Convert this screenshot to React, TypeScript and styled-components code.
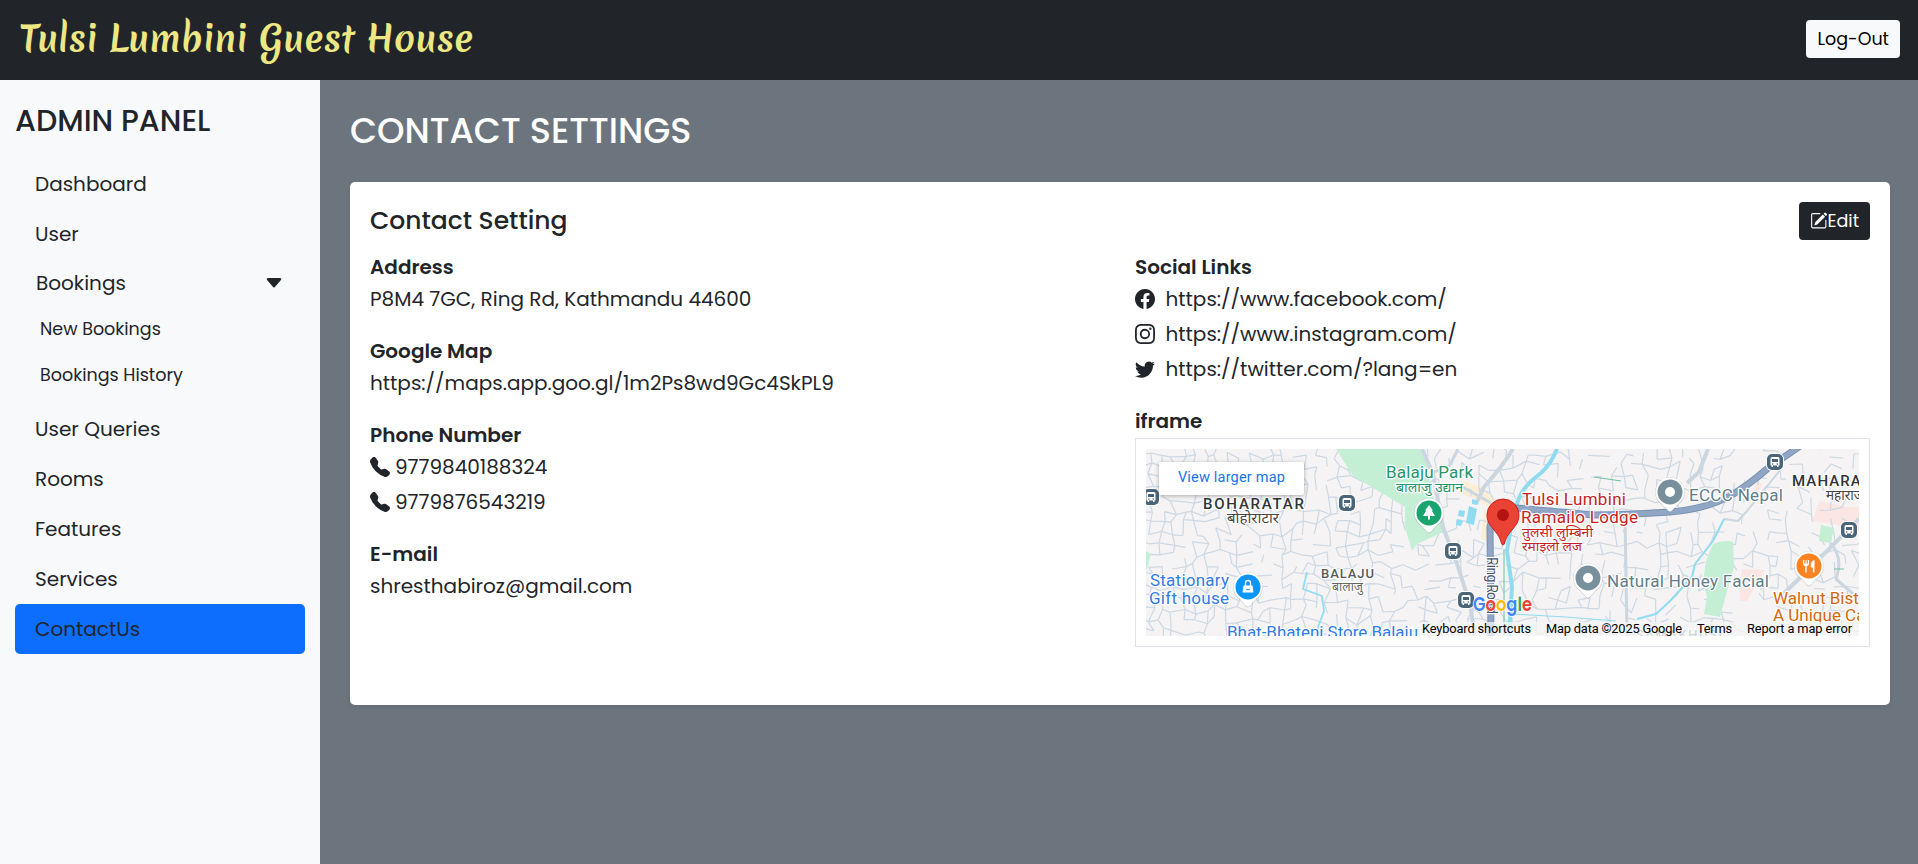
import React from 'react';
import styled, { createGlobalStyle, css } from 'styled-components';
import {
  BsCaretDownFill,
  BsFacebook,
  BsInstagram,
  BsPencilSquare,
  BsTelephoneFill,
  BsTwitter,
} from 'react-icons/bs';

const GlobalStyle = createGlobalStyle`
  html { font-size: 20px; }
  *, *::before, *::after { box-sizing: border-box; }
  body {
    margin: 0;
    font-family: Poppins, Inter, sans-serif;
    font-size: 1rem;
    line-height: 1.5;
    color: #212529;
    background: #6c757d;
  }
  h1, h2, h3, p, ul { margin: 0; padding: 0; }
  ul { list-style: none; }
`;

const Page = styled.div`
  display: flex;
  flex-direction: column;
  height: 864px;
  overflow: hidden;
`;

const Header = styled.header`
  display: flex;
  align-items: flex-start;
  justify-content: space-between;
  height: 80px;
  padding: 20px 18px 0 20px;
  background: #212529;
`;

const Brand = styled.h1`
  font-family: Merienda, Lato, sans-serif;
  font-size: 35px;
  font-weight: 700;
  line-height: 42px;
  margin-top: -2px;
  color: #ede784;
  white-space: nowrap;
`;

const Button = styled.button<{ $dark?: boolean }>`
  display: inline-flex;
  align-items: center;
  height: 38px;
  padding: 0 11px;
  border: 0;
  border-radius: 4px;
  font: 400 17.5px/26px Poppins, Inter, sans-serif;
  color: ${(p) => (p.$dark ? '#fff' : '#000')};
  background: ${(p) => (p.$dark ? '#212529' : '#f8f9fa')};
`;

const Body = styled.div`
  display: flex;
  flex: 1;
`;

const Sidebar = styled.aside`
  width: 320px;
  padding: 23px 15px 0;
  background: #f8f9fa;
`;

const SidebarTitle = styled.h2`
  margin-bottom: 20px;
  font-size: 30px;
  font-weight: 500;
  line-height: 36px;
`;

const NavItem = styled.li<{ $active?: boolean }>`
  height: 50px;
  padding: 10px 20px;
  border-radius: 5px;
  line-height: 30px;
  ${(p) => p.$active && css`background: #0d6efd;`}
`;

const NavToggle = styled.li`
  display: flex;
  align-items: center;
  justify-content: space-between;
  height: 47px;
  padding: 0 21px;
  line-height: 30px;
`;

const SubNav = styled.ul`
  padding-bottom: 5.5px;
`;

const SubNavItem = styled.li`
  padding: 10px 25px;
  font-size: 17.5px;
  line-height: 26.25px;
`;

const Main = styled.main`
  flex: 1;
  padding: 30px 28px 0 30px;
`;

const PageTitle = styled.h2`
  margin-bottom: 30px;
  font-size: 35px;
  font-weight: 500;
  line-height: 42px;
  color: #fff;
`;

const Card = styled.section`
  height: 523px;
  padding: 20px;
  border-radius: 5px;
  background: #fff;
  box-shadow: 0 2px 5px rgba(0, 0, 0, 0.075);
`;

const CardHeader = styled.div`
  display: flex;
  align-items: center;
  justify-content: space-between;
  margin-bottom: 15px;
`;

const CardTitle = styled.h3`
  font-size: 25px;
  font-weight: 500;
  line-height: 30px;
`;

const Columns = styled.div`
  display: grid;
  grid-template-columns: 1fr 1fr;
  column-gap: 30px;
`;

const Group = styled.div`
  margin-bottom: 25px;
`;

const GroupTitle = styled.h3`
  margin-bottom: 5px;
  font-size: 20px;
  font-weight: 600;
  line-height: 24px;
`;

const Line = styled.p<{ $gap?: number }>`
  display: flex;
  align-items: center;
  gap: ${(p) => p.$gap ?? 5}px;
  height: 30px;
  font-weight: 400;
  & + & { margin-top: 5px; }
`;

const Frame = styled.div`
  padding: 10px;
  border: 1px solid #dee2e6;
`;

const MapView = styled.div`
  position: relative;
  height: 187px;
  overflow: hidden;
  font-family: Roboto, sans-serif;
  svg { display: block; }
`;

const LargerMap = styled.a`
  position: absolute;
  top: 13px;
  left: 13px;
  width: 145px;
  height: 33px;
  border-radius: 2px;
  background: #fff;
  box-shadow: 0 1px 4px rgba(0, 0, 0, 0.3);
  font-size: 14.5px;
  line-height: 32px;
  letter-spacing: 0.2px;
  text-align: center;
  color: #1a73e8;
`;

/* ---------- map drawing ---------- */

const streets = (() => {
  let seed = 11;
  const rnd = () => {
    seed = (seed * 16807) % 2147483647;
    return seed / 2147483647;
  };
  const step = 11;
  const cols = 68;
  const rows = 19;
  const pts: [number, number][][] = [];
  for (let r = 0; r < rows; r++) {
    pts.push([]);
    for (let c = 0; c < cols; c++) {
      pts[r].push([c * step - 6 + (rnd() - 0.5) * 8, r * step - 6 + (rnd() - 0.5) * 8 + (c % 7) * 0.6]);
    }
  }
  let d = '';
  for (let r = 0; r < rows - 1; r++) {
    for (let c = 0; c < cols - 1; c++) {
      const density = c > 52 ? 0.36 : c < 24 ? 0.64 : 0.5;
      const [x, y] = pts[r][c];
      if (rnd() < density) d += `M${x.toFixed(1)} ${y.toFixed(1)}L${pts[r][c + 1][0].toFixed(1)} ${pts[r][c + 1][1].toFixed(1)}`;
      if (rnd() < density) d += `M${x.toFixed(1)} ${y.toFixed(1)}L${pts[r + 1][c][0].toFixed(1)} ${pts[r + 1][c][1].toFixed(1)}`;
    }
  }
  return d;
})();

const Label = styled.text<{ $size?: number; $weight?: number }>`
  font-family: Roboto, 'Noto Sans', sans-serif;
  font-size: ${(p) => p.$size ?? 17}px;
  font-weight: ${(p) => p.$weight ?? 400};
  paint-order: stroke;
  stroke: #fff;
  stroke-width: 2.5px;
  stroke-linejoin: round;
`;

const Attribution = styled.text`
  font-family: Roboto, sans-serif;
  font-size: 12.8px;
  fill: #000;
`;

const Logo = styled.text`
  font-family: Poppins, sans-serif;
  font-size: 19px;
  font-weight: 600;
  paint-order: stroke;
  stroke: #fff;
  stroke-width: 1.5px;
`;

const BusStop = ({ x, y }: { x: number; y: number }) => (
  <g transform={`translate(${x} ${y})`}>
    <rect x="-9" y="-9" width="18" height="18" rx="6" fill="#fff" />
    <rect x="-8" y="-8" width="16" height="16" rx="5" fill="#4a6479" />
    <path d="M-4.500 -3.500Q-4.500 -5 -3 -5H3Q4.500 -5 4.500 -3.500V3.500H3.500V5H2V3.500H-2V5H-3.500V3.500H-4.500Z" fill="#fff" />
    <rect x="-3" y="-3" width="6" height="3" fill="#4a6479" />
    <circle cx="-2.300" cy="2" r=".8" fill="#4a6479" />
    <circle cx="2.300" cy="2" r=".8" fill="#4a6479" />
  </g>
);

const Pin = ({ x, y, color, children }: { x: number; y: number; color: string; children?: React.ReactNode }) => (
  <g transform={`translate(${x} ${y})`}>
    <path d="M0 20.500C-2 20.500 -3 18 -8 13A15 15 0 1 1 8 13C3 18 2 20.500 0 20.500Z" fill="#8a949b" opacity=".35" />
    <path d="M0 19.500C-2 19.500 -3 17 -8 12A14.500 14.500 0 1 1 8 12C3 17 2 19.500 0 19.500Z" fill="#fff" />
    <circle r="12.500" fill={color} />
    {children}
  </g>
);

const MapDrawing = () => (
  <svg width="713" height="187" viewBox="0 0 713 187">
    <rect width="713" height="187" fill="#f5f3f4" />
    <g fill="#fce6e4">
      <path d="M674 52L701 58H713V82L687 75L666 72Z" />
      <path d="M596 120L619 121L601 152L593 152Z" />
      <path d="M611 33L617 35L612 43L607 41Z" />
    </g>
    <g fill="#fbeed6">
      <path d="M319 32L336 38L350 52L345 60L330 50L312 44Z" />
      <path d="M338 60L345 70L341 92L335 90Z" />
      <path d="M398 66H440L437 90L420 92Z" opacity=".6" />
    </g>
    <path d={streets} fill="none" stroke="#ccd8e3" strokeWidth="1.200" />
    <g fill="#c4efd5">
      <path d="M190 0L207 27L234 43L259 58V78L266 102L271 95L297 83L291 62L284 35L281 15L274 0Z" />
      <path d="M0 102L5 105L1 120H0Z" />
      <path d="M567 95Q577 90 587 93L588 118L581 142L574 168L558 165L561 148L557 132L560 112Z" />
      <path d="M675 76L688 79L685 94L673 92Z" />
    </g>
    <g fill="none" stroke="#cbd6df" strokeWidth="4" strokeLinejoin="round">
      <path d="M276 0L287 25L297 78L311 115L324 155L329 187" />
      <path d="M367 0Q356 18 338 38L330 55" />
      <path d="M312 0L304 16L286 24" strokeWidth="3" />
      <path d="M313 36L345 54" strokeWidth="3" />
      <path d="M562 0L553 23L541 34" />
      <path d="M479 66L481 187" strokeWidth="3" />
      <path d="M713 70L661 122L634 148" />
      <path d="M684 94Q698 108 690 130L713 150" strokeWidth="3" />
      <path d="M635 20L601 62L592 72L578 70" strokeWidth="2" />
    </g>
    <g fill="none" stroke="#8fdcf0" strokeLinejoin="round">
      <path d="M411 0Q405 15 395 24Q376 38 372 52L367 65L361 102L366 138L363 187" strokeWidth="4" />
      <path d="M578 70L567 92L549 115L546 128L524 152L510 165L491 170" strokeWidth="2" />
      <path d="M161 123L157 140L176 147L178 162L172 178L174 187" strokeWidth="1.800" />
      <path d="M366 165L420 168L470 172" strokeWidth="1" />
    </g>
    <g fill="#8fdcf0">
      <path d="M323 57L331 60L328 76L320 74ZM313 61L319 62L318 68L312 67ZM311 70L317 72L315 77L310 76ZM326 50L332 52L331 56L326 55Z" />
    </g>
    <path d="M358 100V187M688 120H698M448 28L475 32" fill="none" stroke="#6dc19b" strokeWidth="1" />
    <g fill="none" strokeLinejoin="round">
      <path d="M345 187L344 78Q346 60 371 59L447 66Q480 66 524 63Q560 60 584 47Q600 38 621 20L654 -3" stroke="#7791b3" strokeWidth="7" />
      <path d="M345 187L344 78Q346 60 371 59L447 66Q480 66 524 63Q560 60 584 47Q600 38 621 20L654 -3" stroke="#90a6c4" strokeWidth="5" />
    </g>

    <BusStop x={5} y={48} />
    <BusStop x={201} y={54} />
    <BusStop x={307} y={102} />
    <BusStop x={320} y={151} />
    <BusStop x={629} y={13} />
    <BusStop x={703} y={81} />

    <Label x="57" y="60" $size={15} $weight={500} fill="#303438" textLength="101">BOHARATAR</Label>
    <Label x="81" y="74" $size={14} fill="#444" textLength="52" lengthAdjust="spacingAndGlyphs">बोहोराटार</Label>
    <Label x="175" y="129" $size={13} $weight={500} fill="#555b60" textLength="53">BALAJU</Label>
    <Label x="186" y="142" $size={12} fill="#666" textLength="31" lengthAdjust="spacingAndGlyphs">बालाजु</Label>
    <Label x="4" y="137" fill="#2f7be5" textLength="79">Stationary</Label>
    <Label x="3" y="155" fill="#2f7be5" textLength="80">Gift house</Label>
    <Label x="81" y="189" fill="#2f7be5" textLength="191">Bhat-Bhateni Store Balaju</Label>
    <Label x="240" y="29" fill="#24966a" textLength="87">Balaju Park</Label>
    <Label x="250" y="43" $size={13} fill="#24966a" textLength="67" lengthAdjust="spacingAndGlyphs">बालाजु उद्यान</Label>
    <Label x="376" y="56" fill="#c5221f" textLength="104">Tulsi Lumbini</Label>
    <Label x="375" y="74" fill="#c5221f" textLength="117">Ramailo Lodge</Label>
    <Label x="376" y="88" $size={13} fill="#c5221f" textLength="71" lengthAdjust="spacingAndGlyphs">तुलसी लुम्बिनी</Label>
    <Label x="376" y="102" $size={13} fill="#c5221f" textLength="60" lengthAdjust="spacingAndGlyphs">रमाइलो लज</Label>
    <Label x="543" y="52" fill="#607d8b" textLength="94">ECCC Nepal</Label>
    <Label x="461" y="138" fill="#607d8b" textLength="162">Natural Honey Facial</Label>
    <Label x="646" y="37" $size={15} $weight={500} fill="#303438" letterSpacing="1.100">MAHARAJGUNJ</Label>
    <Label x="680" y="51" $size={13.5} fill="#444">महाराजगञ्ज</Label>
    <Label x="627" y="155" fill="#d5660a">Walnut Bistro -</Label>
    <Label x="627" y="172" fill="#d5660a">A Unique Cafe</Label>
    <Label x="490" y="190" $size={13} $weight={500} fill="#777" letterSpacing="1.500">SAMAKHUSI</Label>
    <Label transform="translate(341 108) rotate(90)" $size={14} fill="#44546a" textLength="57">Ring Road</Label>

    <Pin x={102} y={138} color="#0b96fb">
      <path d="M-4.500 -1.500H4.500L5.500 5.500H-5.500Z" fill="#fff" />
      <path d="M-2.500 -1V-4A2.500 2.500 0 0 1 2.500 -4V-1" fill="none" stroke="#fff" strokeWidth="1.300" />
      <path d="M-2 2Q0 4 2 2" fill="none" stroke="#0b96fb" />
    </Pin>
    <Pin x={283} y={64} color="#1aa56f">
      <path d="M0 -8L4 -2.500H2.700L6 3H1V6.500H-1V3H-6L-2.700 -2.500H-4Z" fill="#fff" />
    </Pin>
    <Pin x={442} y={129} color="#78909c"><circle r="5" fill="#fff" /></Pin>
    <Pin x={524} y={43} color="#78909c"><circle r="5" fill="#fff" /></Pin>
    <Pin x={663} y={117} color="#ff8321">
      <path d="M-6 -6V-2.500Q-6 0 -3.700 .3V6.500H-2.300V.3Q0 0 0 -2.500V-6H-1.200V-2.500H-2.400V-6H-3.600V-2.500H-4.800V-6ZM5.500 -6Q1.800 -5 1.800 -.5V1.500H3.800V6.500H5.500Z" fill="#fff" />
    </Pin>

    <path d="M357 96C355 96 355.500 91 351.500 85.500C347 79 341 75 341 66A16 16 0 0 1 373 66C373 75 367 79 362.500 85.500C358.500 91 359 96 357 96Z" fill="#ea4335" stroke="#c5221f" strokeWidth="1" />
    <circle cx="357" cy="66" r="6" fill="#b31412" />

    <Logo x="327" y="162" textLength="59" lengthAdjust="spacingAndGlyphs">
      <tspan fill="#4285f4">G</tspan>
      <tspan fill="#ea4335">o</tspan>
      <tspan fill="#fbbc04">o</tspan>
      <tspan fill="#4285f4">g</tspan>
      <tspan fill="#34a853">l</tspan>
      <tspan fill="#ea4335">e</tspan>
    </Logo>

    <rect x="272" y="173" width="441" height="14" fill="#f5f5f5" opacity=".75" />
    <Attribution x="276" y="184" textLength="109">Keyboard shortcuts</Attribution>
    <Attribution x="400" y="184" textLength="136">Map data ©2025 Google</Attribution>
    <Attribution x="551" y="184" textLength="35">Terms</Attribution>
    <Attribution x="601" y="184" textLength="105">Report a map error</Attribution>
  </svg>
);

/* ---------- page ---------- */

export default function App() {
  return (
    <>
      <GlobalStyle />
      <Page>
        <Header>
          <Brand>Tulsi Lumbini Guest House</Brand>
          <Button>Log-Out</Button>
        </Header>
        <Body>
          <Sidebar>
            <SidebarTitle>ADMIN PANEL</SidebarTitle>
            <ul>
              <NavItem>Dashboard</NavItem>
              <NavItem>User</NavItem>
              <NavToggle>
                Bookings
                <BsCaretDownFill size={20} />
              </NavToggle>
              <li>
                <SubNav>
                  <SubNavItem>New Bookings</SubNavItem>
                  <SubNavItem>Bookings History</SubNavItem>
                </SubNav>
              </li>
              <NavItem>User Queries</NavItem>
              <NavItem>Rooms</NavItem>
              <NavItem>Features</NavItem>
              <NavItem>Services</NavItem>
              <NavItem $active>ContactUs</NavItem>
            </ul>
          </Sidebar>
          <Main>
            <PageTitle>CONTACT SETTINGS</PageTitle>
            <Card>
              <CardHeader>
                <CardTitle>Contact Setting</CardTitle>
                <Button $dark>
                  <BsPencilSquare />
                  Edit
                </Button>
              </CardHeader>
              <Columns>
                <div>
                  <Group>
                    <GroupTitle>Address</GroupTitle>
                    <Line>P8M4 7GC, Ring Rd, Kathmandu 44600</Line>
                  </Group>
                  <Group>
                    <GroupTitle>Google Map</GroupTitle>
                    <Line>https://maps.app.goo.gl/1m2Ps8wd9Gc4SkPL9</Line>
                  </Group>
                  <Group>
                    <GroupTitle>Phone Number</GroupTitle>
                    <Line><BsTelephoneFill />9779840188324</Line>
                    <Line><BsTelephoneFill />9779876543219</Line>
                  </Group>
                  <Group>
                    <GroupTitle>E-mail</GroupTitle>
                    <Line>shresthabiroz@gmail.com</Line>
                  </Group>
                </div>
                <div>
                  <Group>
                    <GroupTitle>Social Links</GroupTitle>
                    <Line $gap={10.5}><BsFacebook />https://www.facebook.com/</Line>
                    <Line $gap={10.5}><BsInstagram />https://www.instagram.com/</Line>
                    <Line $gap={10.5}><BsTwitter />https://twitter.com/?lang=en</Line>
                  </Group>
                  <GroupTitle>iframe</GroupTitle>
                  <Frame>
                    <MapView>
                      <MapDrawing />
                      <LargerMap>View larger map</LargerMap>
                    </MapView>
                  </Frame>
                </div>
              </Columns>
            </Card>
          </Main>
        </Body>
      </Page>
    </>
  );
}
